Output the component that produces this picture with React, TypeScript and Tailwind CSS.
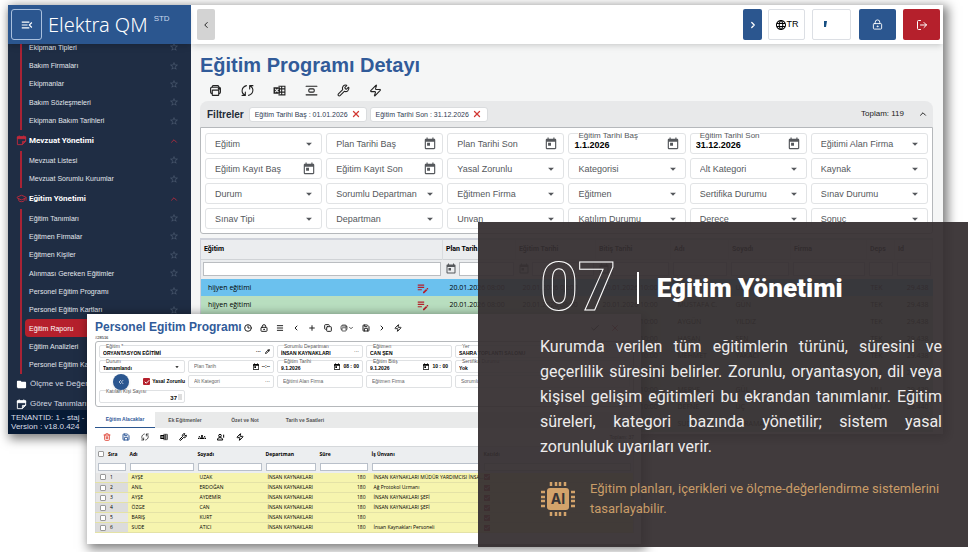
import type { ReactNode } from "react";
import {
  AlignVerticalSpaceAround,
  Check,
  ChevronDown,
  ChevronLeft,
  ChevronRight,
  ChevronsLeft,
  ChevronUp,
  Clock3,
  Copy,
  GraduationCap,
  LockKeyhole,
  LogOut,
  Menu,
  Pencil,
  Plus,
  Save,
  Trash2,
  Wrench,
  X,
  Zap,
} from "lucide-react";
import { IoPrintOutline } from "react-icons/io5";
import {
  MdArrowDropDown,
  MdEditNote,
  MdFolder,
  MdGroups,
  MdLanguage,
  MdMenuOpen,
  MdStarOutline,
  MdToday,
} from "react-icons/md";

type Field = { label: string; kind?: "select" | "date"; value?: string };

const equipment = ["Ekipman Tipleri", "Bakım Firmaları", "Ekipmanlar", "Bakım Sözleşmeleri", "Ekipman Bakım Tarihleri"];
const regulation = ["Mevzuat Listesi", "Mevzuat Sorumlu Kurumlar"];
const training = [
  "Eğitim Tanımları",
  "Eğitmen Firmalar",
  "Eğitmen Kişiler",
  "Alınması Gereken Eğitimler",
  "Personel Eğitim Programı",
  "Personel Eğitim Kartları",
  "Eğitim Raporu",
  "Eğitim Analizleri",
  "Personel Eğitim Katılımları",
];

const filters: Field[] = [
  { label: "Eğitim" },
  { label: "Plan Tarihi Baş", kind: "date" },
  { label: "Plan Tarihi Son", kind: "date" },
  { label: "Eğitim Tarihi Baş", kind: "date", value: "1.1.2026" },
  { label: "Eğitim Tarihi Son", kind: "date", value: "31.12.2026" },
  { label: "Eğitimi Alan Firma" },
  { label: "Eğitim Kayıt Baş", kind: "date" },
  { label: "Eğitim Kayıt Son", kind: "date" },
  { label: "Yasal Zorunlu" },
  { label: "Kategorisi" },
  { label: "Alt Kategori" },
  { label: "Kaynak" },
  { label: "Durum" },
  { label: "Sorumlu Departman" },
  { label: "Eğitmen Firma" },
  { label: "Eğitmen" },
  { label: "Sertifika Durumu" },
  { label: "Sınav Durumu" },
  { label: "Sınav Tipi" },
  { label: "Departman" },
  { label: "Unvan" },
  { label: "Katılım Durumu" },
  { label: "Derece" },
  { label: "Sonuç" },
];

const reportColumns = ["Eğitim", "Plan Tarih", "Eğitim Tarihi", "Bitiş Tarihi", "Adı", "Soyadı", "Firma", "Deps", "Id"];
const reportRows = [
  ["AYŞE", "UZAK", "TEK", "29.438"],
  ["MUSTAFA C.", "GÜN", "TEK", "29.438"],
  ["AYGÜN", "YILDIZ", "TEK", "29.438"],
  ["HASAN", "ŞEN", "TEK", "29.438"],
  ["MEHMET", "YAKACI", "TEK", "29.438"],
  ["ALİ", "KOÇ", "MU", "29.439"],
  ["MERVE", "GÜL", "MU", "29.439"],
  ["DEFNE", "UÇ", "MU", "29.440"],
  ["SUDE", "KARAMAN", "MU", "29.440"],
];

const people = [
  ["AYŞE", "UZAK", "İNSAN KAYNAKLARI MÜDÜR YARDIMCISI İNSA..."],
  ["ANIL", "ERDOĞAN", "Ağ Protokol Uzmanı"],
  ["AYŞE", "AYDEMİR", "İNSAN KAYNAKLARI ŞEFİ"],
  ["ÖZGE", "CAN", "İNSAN KAYNAKLARI ŞEFİ"],
  ["BARIŞ", "KURT", ""],
  ["SUDE", "ATICI", "İnsan Kaynakları Personeli"],
];

function PrintIcon({ className }: { className: string }) {
  return <IoPrintOutline className={`${className} [&_*]:[stroke-width:46px]`} />;
}

function SyncIcon({ className }: { className: string }) {
  return (
    <svg viewBox="0 0 24 24" fill="none" stroke="currentColor" strokeWidth="2" strokeLinecap="round" strokeLinejoin="round" className={className}>
      <path d="M10 3C0 6 0 17 7 20M2 21h6v-6M14 21c10-3 10-14 3-17M22 3h-6v6" />
    </svg>
  );
}

function ExcelIcon({ className }: { className: string }) {
  return (
    <svg viewBox="0 0 24 24" fill="none" stroke="currentColor" strokeWidth="2" className={className}>
      <path d="M10 4h12v16H10M10 9h12M10 15h12M16 4v16" />
      <path d="M1 6h12v12H1z" fill="currentColor" stroke="none" />
      <path d="M4 9l6 6M10 9l-6 6" stroke="#f5f6f6" />
    </svg>
  );
}

function NoteIcon({ className }: { className: string }) {
  return (
    <svg viewBox="0 0 24 24" fill="none" stroke="currentColor" strokeWidth="2" strokeLinejoin="round" className={className}>
      <path d="M3 4h18v10l-7 7H3z" />
      <path d="M3 4h18v4H3z" fill="currentColor" />
      <path d="M7 1v4M17 1v4M14 21v-7h7M15 18l6-6" />
    </svg>
  );
}

function AddPersonIcon({ className }: { className: string }) {
  return (
    <svg viewBox="0 0 24 24" fill="none" stroke="currentColor" strokeWidth="3" className={className}>
      <circle cx="9" cy="8" r="4" />
      <path d="M1 21c0-5 3-7 8-7s8 2 8 7zM20 5v9" />
    </svg>
  );
}

function AiChip() {
  return (
    <svg viewBox="0 0 36 36" className="size-9 shrink-0" fill="#d3a36b">
      <rect x="7" y="7" width="22" height="22" rx="3" />
      <path
        d="M11 1v4M16 1v4M20 1v4M25 1v4M11 31v4M16 31v4M20 31v4M25 31v4M1 11h4M1 16h4M1 20h4M1 25h4M31 11h4M31 16h4M31 20h4M31 25h4"
        stroke="#d3a36b"
        strokeWidth="2.500"
      />
      <text x="18" y="23" textAnchor="middle" fontSize="14" fontWeight="700" fontFamily="Inter, sans-serif" fill="#393536">
        AI
      </text>
    </svg>
  );
}

function NavGroup({ items, className }: { items: string[]; className: string }) {
  return (
    <ul className={`ml-3 mr-2 grid auto-rows-fr border-l-2 border-[#a82335] pl-[3px] text-[7px] ${className}`}>
      {items.map((item) => (
        <li key={item} className="min-h-0">
          <a
            href="#"
            className={`flex h-full items-center justify-between rounded-sm pl-1 pr-1 ${
              item === "Eğitim Raporu" ? "bg-[#b5202c] text-white" : "text-[#e2e6ec]"
            }`}
          >
            <span>{item}</span>
            <MdStarOutline className="size-[10px] shrink-0 text-[#46546a]" />
          </a>
        </li>
      ))}
    </ul>
  );
}

function NavHeading({ icon, children }: { icon: ReactNode; children: ReactNode }) {
  return (
    <button className="flex h-[21px] w-full items-center gap-[2px] pl-2 pr-3 font-['Roboto'] font-bold text-white">
      {icon}
      <span className="flex-1 text-left">{children}</span>
      <ChevronUp className="size-[10px] text-[#c02a3c]" strokeWidth={2} />
    </button>
  );
}

function Sidebar() {
  return (
    <aside className="flex w-[183px] shrink-0 flex-col bg-[#1f2d44] text-[8px] leading-none">
      <div className="z-10 flex h-[39px] shrink-0 items-center bg-[#2b568f] pl-[3px] text-white shadow-md">
        <button aria-label="Menü" className="flex size-[31px] items-center justify-center rounded-[3px] border border-[#a9c0de]">
          <MdMenuOpen className="size-[14px]" />
        </button>
        <span className="ml-[6px] font-['Noto_Sans'] text-[20px] font-light">Elektra QM</span>
        <span className="mb-3 ml-[6px] text-[8px] text-[#c9d8ec]">STD</span>
      </div>
      <nav className="h-[370px] overflow-hidden">
        <NavGroup items={equipment} className="-mt-[6px] h-[92px]" />
        <NavHeading icon={<NoteIcon className="size-[11px] text-[#c02a3c]" />}>Mevzuat Yönetimi</NavHeading>
        <NavGroup items={regulation} className="h-[37px]" />
        <NavHeading icon={<GraduationCap className="size-[11px] text-[#c02a3c]" strokeWidth={2} />}>Eğitim Yönetimi</NavHeading>
        <NavGroup items={training} className="h-[165px]" />
        <a href="#" className="flex h-5 items-center gap-[3px] pl-2 text-[#d5dae2]">
          <MdFolder className="size-[11px] text-white" />
          Ölçme ve Değerlendirme
        </a>
        <a href="#" className="flex h-5 items-center gap-[3px] pl-2 text-[#d5dae2]">
          <NoteIcon className="size-[11px] text-white" />
          Görev Tanımları
        </a>
      </nav>
      <div className="z-10 -mt-1 h-6 bg-[#071b36] px-[3px] pt-[3px] leading-[9px] text-[#d9dee6]">
        <p>TENANTID: 1 - staj -</p>
        <p>Version : v18.0.424</p>
      </div>
    </aside>
  );
}

function TopBar() {
  return (
    <header className="flex h-[39px] items-center bg-white pl-[6px] pr-[3px] shadow-md">
      <button aria-label="Geri" className="flex h-[31px] w-[18px] items-center justify-center rounded-[2px] bg-[#d3d3d3]">
        <ChevronLeft className="size-[10px]" />
      </button>
      <button aria-label="İleri" className="ml-auto flex h-[31px] w-[19px] items-center justify-center rounded-[2px] bg-[#2b568f] text-white">
        <ChevronRight className="size-[10px]" strokeWidth={3} />
      </button>
      <button className="ml-[6px] flex h-[31px] w-[37px] items-center justify-center rounded-[2px] border border-[#dcdfe4] text-[9px]">
        <MdLanguage className="size-3" />
        TR
      </button>
      <button aria-label="Profil" className="ml-[7px] flex h-[31px] w-[39px] items-center rounded-[2px] border border-[#dcdfe4] pl-[10px]">
        <svg viewBox="0 0 6 8" className="-mt-[2px] h-2 w-[6px]">
          <path d="M1 1h3L3 7H1z" fill="#174f82" />
        </svg>
      </button>
      <button aria-label="Kilitle" className="ml-2 flex h-[31px] w-[37px] items-center justify-center rounded-[2px] bg-[#2b568f] text-white">
        <LockKeyhole className="size-[11px]" />
      </button>
      <button aria-label="Çıkış" className="ml-[7px] flex h-[31px] w-[37px] items-center justify-center rounded-[2px] bg-[#b5202c] text-white">
        <LogOut className="size-3" />
      </button>
    </header>
  );
}

function FilterField({ label, kind = "select", value }: Field) {
  return (
    <div className="relative flex h-[21px] items-center rounded-[3px] border border-[#e1e3e5] bg-white px-[5px]">
      {kind === "select" ? (
        <>
          <select aria-label={label} className="w-full appearance-none bg-transparent pl-1 text-[9px] leading-[12px] text-[#55585c]">
            <option>{label}</option>
          </select>
          <MdArrowDropDown className="size-[14px] shrink-0 text-[#55585c]" />
        </>
      ) : (
        <>
          {value && <span className="absolute left-[9px] -top-[3px] bg-white text-[8px] leading-[9px] text-[#55585c]">{label}</span>}
          <input
            aria-label={label}
            placeholder={label}
            defaultValue={value}
            className={`w-full min-w-0 text-[9px] leading-[12px] placeholder:text-[#55585c] ${value ? "mt-[3px] font-bold text-black" : "pl-1"}`}
          />
          <MdToday className="size-[14px] shrink-0 text-[#55585c]" />
        </>
      )}
    </div>
  );
}

function Chip({ children }: { children: ReactNode }) {
  return (
    <button className="flex h-[15px] items-center gap-[3px] rounded-[3px] border border-[#dadcde] bg-white px-[5px] text-[7px] leading-none whitespace-nowrap text-[#2f3b52]">
      {children}
      <X className="size-[10px] text-[#d23a35]" strokeWidth={3} />
    </button>
  );
}

function ReportTable() {
  return (
    <table className="mt-1 w-full table-fixed border-collapse border-l border-t-2 border-[#cfd2da] font-['Open_Sans'] text-[7px] leading-none">
      <colgroup>
        <col className="w-[242px]" />
        <col className="w-[73px]" />
        <col className="w-[80px]" />
        <col className="w-[75px]" />
        <col className="w-[58px]" />
        <col className="w-[62px]" />
        <col />
        <col className="w-[28px]" />
        <col className="w-[38px]" />
      </colgroup>
      <thead className="bg-[#ebedef] font-['Roboto']">
        <tr className="h-5">
          {reportColumns.map((name) => (
            <th key={name} className="border-r border-[#d9dcdf] px-[3px] text-left font-bold">
              {name}
            </th>
          ))}
        </tr>
        <tr className="h-5 border-t border-[#d0d3d6]">
          {reportColumns.map((name, i) => (
            <td key={name} className="px-[2px]">
              <div className="flex items-center gap-[2px]">
                {i > 0 && i < 4 && <MdToday className="size-3 shrink-0 text-[#55585c]" />}
                <input aria-label={`${name} filtresi`} className="h-[14px] w-full min-w-0 border border-[#babdc1] bg-white" />
              </div>
            </td>
          ))}
        </tr>
      </thead>
      <tbody>
        {reportRows.map((row, i) => (
          <tr key={i} className={`h-[17px] ${i === 0 ? "bg-[#6bc1ee]" : "bg-[#b9dfc0]"}`}>
            <td className="px-[7px]">
              <div className="flex items-center justify-between">
                hijyen eğitimi
                <MdEditNote className="mr-[6px] size-[14px] text-[#b5202c]" />
              </div>
            </td>
            <td className="pl-[7px] whitespace-nowrap">20.01.2026 08:00</td>
            <td className="pl-[7px] whitespace-nowrap">20.01.2026 08:00</td>
            <td className="pl-[7px] whitespace-nowrap">20.01.2026 10:00</td>
            <td className="pl-[7px]">{row[0]}</td>
            <td className="pl-[7px]">{row[1]}</td>
            <td />
            <td className="pl-1">{row[2]}</td>
            <td className="pr-1 text-right">{row[3]}</td>
          </tr>
        ))}
      </tbody>
    </table>
  );
}

function ReportWindow() {
  return (
    <div className="isolate flex bg-[#f5f6f6] shadow-[3px_3px_10px_2px_rgba(0,0,0,0.5)]">
      <Sidebar />
      <div className="h-[429px] min-w-0 flex-1 overflow-hidden">
        <TopBar />
        <main className="pl-[9px] pr-[10px]">
          <h1 className="pt-2 text-[20px] leading-[26px] font-bold text-[#315b99]">Eğitim Programı Detayı</h1>
          <div className="flex h-[23px] items-center gap-[19px] pt-[1px] pl-[9px] text-[#222]">
            <button aria-label="Yazdır"><PrintIcon className="size-[13px]" /></button>
            <button aria-label="Yenile"><SyncIcon className="size-[13px]" /></button>
            <button aria-label="Excel"><ExcelIcon className="size-[13px]" /></button>
            <button aria-label="Hizala"><AlignVerticalSpaceAround className="size-[13px]" /></button>
            <button aria-label="Ayarlar"><Wrench className="size-[13px]" /></button>
            <button aria-label="İşlemler"><Zap className="size-[13px]" /></button>
          </div>
          <div className="flex h-[26px] items-center gap-[3px] rounded-t-lg bg-[#e8e9ea] pl-[7px] pr-[5px]">
            <h2 className="mr-[2px] text-[10px] font-bold text-[#222b38]">Filtreler</h2>
            <Chip>Eğitim Tarihi Baş : 01.01.2026</Chip>
            <Chip>Eğitim Tarihi Son : 31.12.2026</Chip>
            <span className="ml-auto mr-[11px] text-[8px] text-[#222]">Toplam: 119</span>
            <ChevronUp className="size-[10px]" />
          </div>
          <div className="grid grid-cols-6 gap-1 rounded-b-[3px] border border-[#b5b8bb] bg-white px-1 pt-[5px] pb-1">
            {filters.map((f) => (
              <FilterField key={f.label} {...f} />
            ))}
          </div>
          <ReportTable />
        </main>
      </div>
    </div>
  );
}

function FormField({
  label,
  value,
  time,
  menu,
  className = "",
}: {
  label: string;
  value?: string;
  time?: string;
  menu?: ReactNode;
  className?: string;
}) {
  return (
    <div className={`relative flex h-[13px] items-center rounded-[2px] border border-[#dfe1e3] px-[3px] ${className}`}>
      {value && <span className="absolute left-[6px] -top-[2px] bg-white leading-[5px] whitespace-nowrap text-[#555]">{label}</span>}
      <input
        aria-label={label}
        placeholder={label}
        defaultValue={value}
        className={`w-full min-w-0 leading-[7px] placeholder:text-[#666] ${value ? "pt-1 font-bold text-black" : "pl-[2px]"}`}
      />
      {time && (
        <span className="flex items-center gap-[2px] font-bold whitespace-nowrap">
          <MdToday className="size-2" />
          {time}
        </span>
      )}
      {menu}
    </div>
  );
}

function DialogToolbar() {
  return (
    <div className="flex items-center gap-2 text-[#222]">
      <button aria-label="Geçmiş"><Clock3 className="size-2" strokeWidth={3} /></button>
      <button aria-label="Kilitle"><LockKeyhole className="size-2" strokeWidth={3} /></button>
      <button aria-label="Liste"><Menu className="size-2" strokeWidth={3} /></button>
      <button aria-label="Önceki"><ChevronLeft className="size-2" strokeWidth={3} /></button>
      <button aria-label="Yeni"><Plus className="size-2" strokeWidth={3} /></button>
      <button aria-label="Kopyala"><Copy className="size-2" strokeWidth={3} /></button>
      <button aria-label="Yazdır" className="flex items-center">
        <PrintIcon className="size-2" />
        <ChevronDown className="size-[6px]" strokeWidth={3} />
      </button>
      <button aria-label="Kaydet"><Save className="size-2" strokeWidth={3} /></button>
      <button aria-label="Sonraki"><ChevronRight className="size-2" strokeWidth={3} /></button>
      <button aria-label="İşlemler"><Zap className="size-2" strokeWidth={3} /></button>
    </div>
  );
}

function ParticipantsTable() {
  return (
    <table className="w-full table-fixed border-collapse border border-[#d5d8db] font-['Open_Sans'] text-[5px] leading-none whitespace-nowrap">
      <colgroup>
        <col className="w-8" />
        <col className="w-[68px]" />
        <col className="w-[68px]" />
        <col className="w-[54px]" />
        <col className="w-[52px]" />
        <col className="w-[112px]" />
        <col />
      </colgroup>
      <thead className="bg-[#eceef0]">
        <tr className="h-[15px]">
          <th className="pl-[2px]">
            <label className="flex items-center gap-1">
              <input type="checkbox" className="size-[6px] appearance-none rounded-[1px] border border-[#999] bg-white" />
              Sıra
            </label>
          </th>
          {["Adı", "Soyadı", "Departman", "Süre", "İş Ünvanı", "Katıldı"].map((name) => (
            <th key={name} className="px-[2px] text-left font-bold">
              {name}
            </th>
          ))}
        </tr>
        <tr className="h-[11px]">
          {["Sıra", "Adı", "Soyadı", "Departman", "Süre", "İş Ünvanı", "Katıldı"].map((name) => (
            <td key={name} className="px-[2px]">
              <input aria-label={`${name} filtresi`} className="block h-2 w-full border border-[#b9c0ca] bg-white" />
            </td>
          ))}
        </tr>
      </thead>
      <tbody className="bg-[#f6f4ae]">
        {people.map(([name, surname, title], i) => (
          <tr key={i} className="h-[10px] border-b border-[#e4e2a6]">
            <td className={`pl-1 ${i % 2 ? "bg-[#dcdcdc]" : "bg-[#e6e6e6]"}`}>
              <label className="flex items-center gap-1">
                <input type="checkbox" className="size-[6px] appearance-none rounded-[1px] border border-[#999] bg-white" />
                {i + 1}
              </label>
            </td>
            <td className="pl-1">{name}</td>
            <td className="pl-1">{surname}</td>
            <td className="pl-1">İNSAN KAYNAKLARI</td>
            <td className="pr-1 text-right">180</td>
            <td className="pl-1">{title}</td>
            <td className="pl-[2px]">
              <Check className="size-[6px] bg-[#b5202c] text-white" strokeWidth={4} />
            </td>
          </tr>
        ))}
      </tbody>
    </table>
  );
}

function ProgramDialog() {
  return (
    <section className="absolute top-[314px] right-[327px] left-[87px] bg-white pr-[7px] pb-[11px] pl-2 text-[5px] leading-none shadow-[3px_3px_10px_2px_rgba(0,0,0,0.5)]">
      <div className="flex h-[27px] items-center gap-[2px]">
        <div className="pt-1">
          <h2 className="text-[12px] leading-[15px] font-bold whitespace-nowrap text-[#315b99]">Personel Egitim Programı</h2>
          <p className="text-[4px] leading-[5px]">#28516</p>
        </div>
        <DialogToolbar />
        <div className="ml-auto flex gap-[10px] pr-[14px]">
          <Check className="size-[10px]" />
          <X className="size-[10px] text-[#b5202c]" />
        </div>
      </div>

      <div className="grid grid-cols-6 gap-x-[3px] gap-y-[2px] rounded-[3px] border border-[#b5b8bb] px-[3px] pt-[3px] pb-[3px]">
        <FormField
          label="Eğitim *"
          value="ORYANTASYON EĞİTİMİ"
          className="col-span-2"
          menu={
            <>
              <span className="mr-1 font-bold">···</span>
              <Pencil className="size-[5px] shrink-0" strokeWidth={4} />
            </>
          }
        />
        <FormField label="Sorumlu Departman" value="İNSAN KAYNAKLARI" menu={<span>···</span>} />
        <FormField label="Eğitmen" value="CAN ŞEN" />
        <FormField label="Yer" value="SAHRA TOPLANTI SALONU" className="col-span-2" />

        <FormField label="Durum" value="Tamamlandı" menu={<MdArrowDropDown className="size-2 shrink-0" />} />
        <FormField label="Plan Tarih" time="--:--" />
        <FormField label="Eğitim Tarihi" value="9.1.2026" time="08 : 00" />
        <FormField label="Eğitim Bitiş" value="9.1.2026" time="10 : 00" />
        <FormField label="Sertifika Durumu" value="Yok" className="col-span-2" />

        <div className="flex h-[13px] items-center justify-between pl-[14px]">
          <button aria-label="Daralt" className="relative z-10 flex size-4 items-center justify-center rounded-full bg-[#2b568f] text-white shadow">
            <ChevronsLeft className="size-2" />
          </button>
          <label className="flex items-center gap-[2px] font-bold">
            <span className="flex size-[7px] items-center justify-center rounded-[1px] bg-[#b5202c] text-white">
              <input type="checkbox" defaultChecked className="absolute size-[7px] appearance-none" />
              <Check className="size-[6px]" strokeWidth={4} />
            </span>
            Yasal Zorunlu
          </label>
        </div>
        <FormField label="Alt Kategori" menu={<span>···</span>} />
        <FormField label="Eğitimi Alan Firma" />
        <FormField label="Eğitmen Firma" />
        <FormField label="Sorumlu" className="col-span-2" />

        <div className="relative flex h-[13px] items-center justify-end rounded-[2px] border border-[#dfe1e3] px-[2px]">
          <label htmlFor="count" className="absolute left-[6px] -top-[2px] bg-white leading-[5px] text-[#555]">
            Katılan Kişi Sayısı
          </label>
          <input id="count" defaultValue="37" className="w-6 pt-[2px] text-right text-[6px] font-bold" />
          <span className="ml-[1px] h-[6px] w-1 bg-[#ddd]" />
        </div>
      </div>

      <div role="tablist" className="mt-[5px] flex h-4 bg-[#e9eaea] font-bold text-[#555]">
        <button role="tab" aria-selected="true" className="w-[60px] border-b border-[#2b568f] bg-white text-[#315b99]">
          Eğitim Alacaklar
        </button>
        <button role="tab" className="w-[60px]">Ek Eğitmenler</button>
        <button role="tab" className="w-[60px]">Özet ve Not</button>
        <button role="tab" className="w-[60px]">Tarih ve Saatleri</button>
      </div>

      <div className="flex h-[18px] items-center gap-[11px] pl-2">
        <button aria-label="Sil"><Trash2 className="size-2 text-[#e2564a]" strokeWidth={3} /></button>
        <button aria-label="Kaydet"><Save className="size-2 text-[#315b99]" strokeWidth={3} /></button>
        <button aria-label="Yenile"><SyncIcon className="size-2" /></button>
        <button aria-label="Excel"><ExcelIcon className="size-2" /></button>
        <button aria-label="Ayarlar"><Wrench className="size-2" strokeWidth={3} /></button>
        <button aria-label="Grup"><MdGroups className="size-2" /></button>
        <button aria-label="Kişi ekle"><AddPersonIcon className="size-2" /></button>
        <button aria-label="İşlemler"><Zap className="size-2" strokeWidth={3} /></button>
        <span className="ml-auto">Toplam: 37</span>
      </div>

      <ParticipantsTable />
    </section>
  );
}

function Summary() {
  const lines = [
    "Kurumda verilen tüm eğitimlerin türünü, süresini ve",
    "geçerlilik süresini belirler. Zorunlu, oryantasyon, dil veya",
    "kişisel gelişim eğitimleri bu ekrandan tanımlanır. Eğitim",
    "süreleri, kategori bazında yönetilir; sistem yasal",
  ];
  return (
    <section className="absolute top-[222px] right-0 left-[478px] h-[325px] bg-[#352f31]/94 pt-8 pr-[26px] pl-[62px] font-['Roboto',sans-serif] text-white">
      <div className="flex h-[68px] items-center">
        <span className="text-[66px] leading-[68px] font-bold text-transparent [-webkit-text-stroke:1px_white]">07</span>
        <span className="ml-[21px] h-8 w-[2px] bg-white" />
        <h2 className="ml-[18px] text-[26px] leading-8 font-black whitespace-nowrap">Eğitim Yönetimi</h2>
      </div>
      <p className="mt-3 text-[16px] leading-[25px] text-[#eeecec]">
        {lines.map((line) => (
          <span key={line} className="block [text-align-last:justify]">
            {line}
          </span>
        ))}
        zorunluluk uyarıları verir.
      </p>
      <div className="mt-5 flex items-center gap-[14px]">
        <AiChip />
        <p className="text-[13px] leading-5 text-[#c99d68]">Eğitim planları, içerikleri ve ölçme-değerlendirme sistemlerini tasarlayabilir.</p>
      </div>
    </section>
  );
}

export default function App() {
  return (
    <div className="relative min-h-screen overflow-hidden bg-white pt-[5px] pr-[25px] pb-10 pl-2 font-['Liberation_Sans',sans-serif]">
      <ReportWindow />
      <ProgramDialog />
      <Summary />
    </div>
  );
}
